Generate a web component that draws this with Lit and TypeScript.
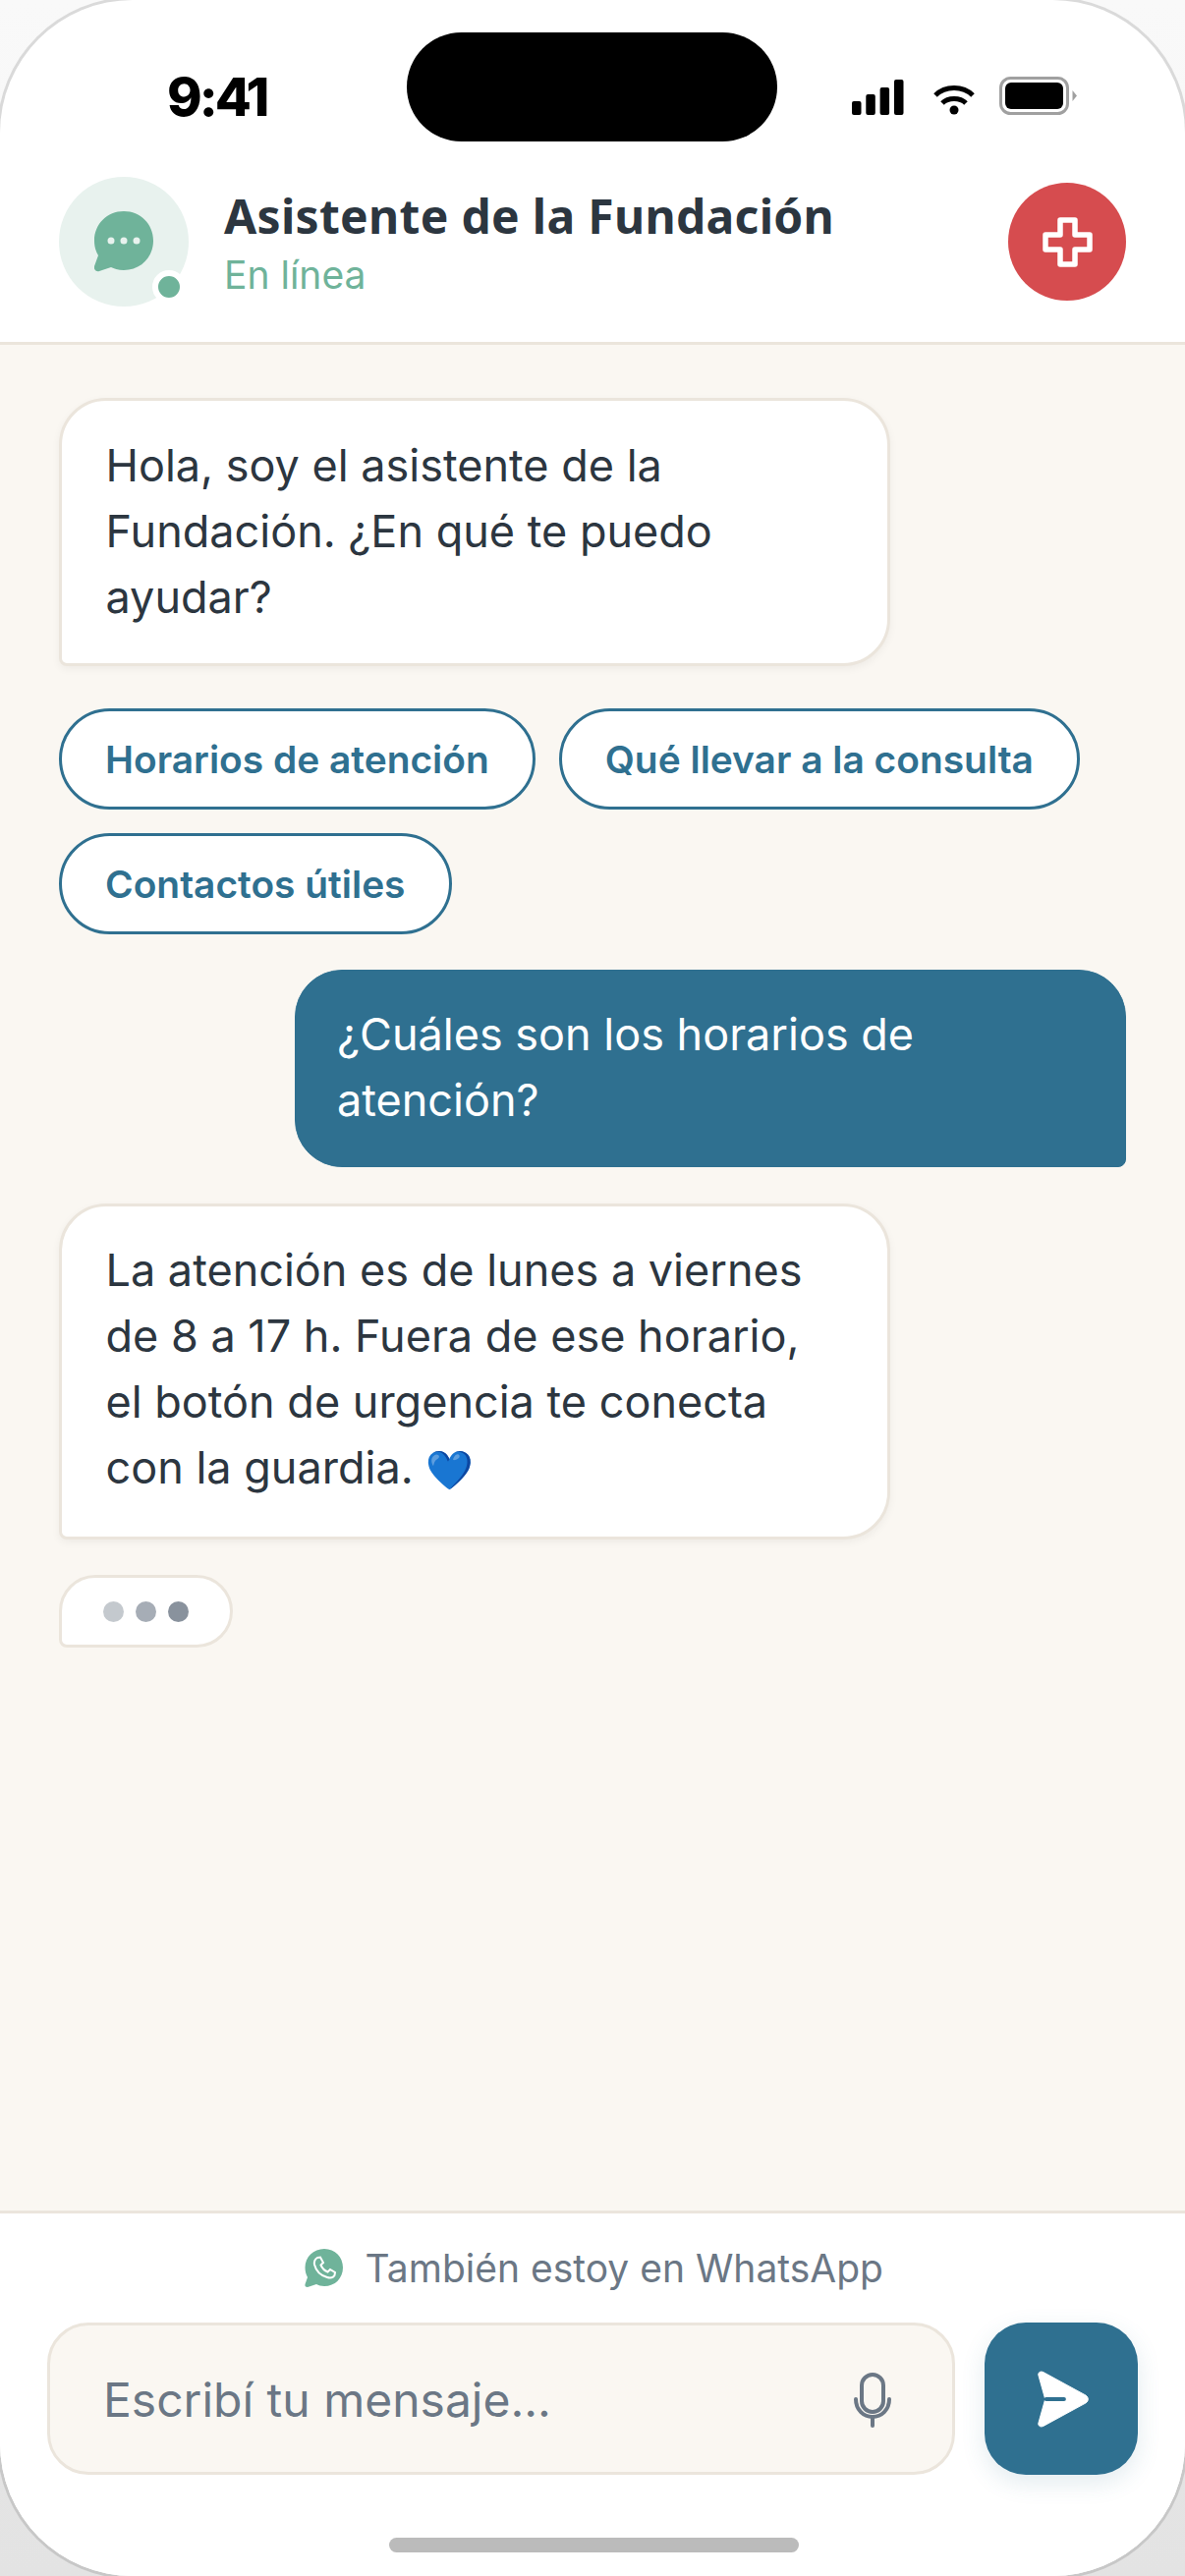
import { LitElement, html, css } from 'lit';
import { customElement } from 'lit/decorators.js';

@customElement('app-root')
export class AppRoot extends LitElement {
	static styles = css`
		:host {
			display: block;
			width: 1206px;
			height: 2622px;
			background: linear-gradient(180deg, #f9f9f9 0%, #e3e3e3 100%);
			font-family: 'Inter', 'Liberation Sans', sans-serif;
			color: #2c3640;
			overflow: hidden;
		}
		.phone {
			box-sizing: border-box;
			width: 1206px;
			height: 2622px;
			border-radius: 135px;
			background: #fff;
			box-shadow: 0 0 0 3px rgba(0, 0, 0, 0.12);
			overflow: hidden;
			display: flex;
			flex-direction: column;
		}
		.status {
			height: 180px;
			flex: none;
			display: flex;
			align-items: flex-start;
			padding: 33px 110px 0 170px;
			box-sizing: border-box;
		}
		.time {
			width: 102px;
			font-size: 54px;
			font-weight: 800;
			line-height: 66px;
			margin-top: 33px;
			letter-spacing: -3px;
			white-space: nowrap;
			color: #000;
		}
		.island {
			width: 377px;
			height: 111px;
			background: #000;
			border-radius: 56px;
			margin-left: 142px;
		}
		.status-icons {
			display: flex;
			align-items: flex-end;
			margin: 45px 0 0 auto;
			gap: 25px;
		}
		.status-icons svg {
			display: block;
		}
		.signal {
			margin-right: 5px;
		}
		.header {
			flex: none;
			height: 171px;
			box-sizing: border-box;
			border-bottom: 3px solid #ebe5dc;
			display: flex;
			align-items: flex-start;
			padding: 0 60px;
		}
		.avatar {
			width: 132px;
			height: 132px;
			border-radius: 50%;
			background: #e8f2ee;
			display: flex;
			align-items: center;
			justify-content: center;
			position: relative;
			flex: none;
		}
		.online {
			position: absolute;
			right: 3px;
			bottom: 3px;
			width: 22px;
			height: 22px;
			border-radius: 50%;
			background: #6fb39a;
			border: 6px solid #fff;
		}
		.who {
			flex: 1;
			padding: 8px 0 0 36px;
		}
		.name {
			font-family: 'Noto Sans', sans-serif;
			font-size: 48px;
			font-weight: 700;
			line-height: 64px;
			letter-spacing: 0.3px;
			color: #2c3640;
		}
		.state {
			font-size: 39px;
			line-height: 56px;
			color: #6fb39a;
		}
		.sos {
			flex: none;
			width: 120px;
			height: 120px;
			margin-top: 6px;
			border-radius: 50%;
			background: #d64c4f;
			display: flex;
			align-items: center;
			justify-content: center;
		}
		.chat {
			flex: 1;
			background: #faf7f2;
			display: flex;
			flex-direction: column;
			align-items: flex-start;
			padding: 54px 60px 0;
			gap: 36.5px;
		}
		.bubble {
			box-sizing: border-box;
			width: 846px;
			padding: 31.5px 44.5px 34.5px;
			font-size: 45px;
			line-height: 67px;
			border-radius: 48px 48px 48px 8px;
			background: #fff;
			border: 3px solid #ebe5dc;
			box-shadow: 0 3px 8px rgba(0, 0, 0, 0.05);
		}
		.bubble.user {
			align-self: flex-end;
			padding: 31px 42px 34px;
			background: #2f7090;
			border: 1px solid #2f7090;
			color: #fff;
			box-shadow: none;
			border-radius: 48px 48px 8px 48px;
		}
		.emoji {
			font-size: 39px;
		}
		.chips {
			display: flex;
			flex-wrap: wrap;
			gap: 24px;
			margin-top: 6px;
		}
		.chip {
			box-sizing: border-box;
			height: 103px;
			padding: 0 44px;
			display: flex;
			align-items: center;
			border: 3px solid #2f7090;
			border-radius: 52px;
			background: #fff;
			color: #2f7090;
			font-size: 38.9px;
			font-weight: 600;
		}
		.typing {
			box-sizing: border-box;
			width: 177px;
			height: 74px;
			border: 3px solid #ebe5dc;
			border-radius: 37px 37px 37px 8px;
			background: #fff;
			display: flex;
			align-items: center;
			justify-content: center;
			gap: 12px;
		}
		.dot {
			width: 21px;
			height: 21px;
			border-radius: 50%;
			background: #6b7785;
		}
		.footer {
			flex: none;
			height: 372px;
			box-sizing: border-box;
			border-top: 3px solid #ebe5dc;
			background: #fff;
			display: flex;
			flex-direction: column;
		}
		.wa {
			height: 111px;
			display: flex;
			align-items: center;
			justify-content: center;
			gap: 22.5px;
			padding-left: 3px;
			font-size: 39px;
			color: #6b7785;
			flex: none;
		}
		.composer {
			display: flex;
			gap: 30px;
			padding: 0 48px;
			height: 155px;
			flex: none;
		}
		.input {
			flex: 1;
			box-sizing: border-box;
			border: 3px solid #ebe5dc;
			border-radius: 42px;
			background: #faf7f2;
			display: flex;
			align-items: center;
			justify-content: space-between;
			padding: 2px 62px 0 54px;
			font-size: 48px;
			color: #6b7785;
		}
		.send {
			flex: none;
			width: 156px;
			border-radius: 42px;
			background: #2f7090;
			display: flex;
			align-items: center;
			justify-content: center;
			box-shadow: 0 8px 24px rgba(47, 112, 144, 0.14);
		}
		.send svg {
			margin-left: 4px;
		}
		.home {
			width: 417px;
			height: 15px;
			border-radius: 8px;
			background: #bbbbbb;
			margin: 64px 0 0 396px;
			flex: none;
		}
	`;

	render() {
		return html`<div class="phone">
			<div class="status">
				<span class="time">9:41</span>
				<div class="island"></div>
				<div class="status-icons">
					<svg class="signal" width="53" height="36" viewBox="0 0 53 36" fill="#000">
						<rect x="0" y="22" width="9.500" height="14" rx="2"></rect>
						<rect x="14.300" y="15" width="9.500" height="21" rx="2"></rect>
						<rect x="28.600" y="8" width="9.500" height="28" rx="2"></rect>
						<rect x="43" y="0" width="9.500" height="36" rx="2"></rect>
					</svg>
					<svg width="42" height="31" viewBox="0 0 42 31" fill="none" stroke="#000" stroke-width="5">
						<path d="M2 11 C12 1 30 1 40 11"></path>
						<path d="M9 19 C15 13 27 13 33 19"></path>
						<circle cx="21" cy="26" r="4.500" fill="#000" stroke="none"></circle>
					</svg>
					<svg width="79" height="39" viewBox="0 0 79 39">
						<rect x="1.500" y="1.500" width="68" height="36" rx="10" fill="none" stroke="#a0a0a0" stroke-width="3"></rect>
						<rect x="6" y="6" width="59" height="27" rx="6" fill="#000"></rect>
						<path d="M74.500 14 L79 19.500 L74.500 25 Z" fill="#a0a0a0"></path>
					</svg>
				</div>
			</div>
			<div class="header">
				<div class="avatar">
					<svg width="60" height="62" viewBox="0 0 60 62">
						<path d="M30 0 C47 0 60 13 60 30 C60 47 47 60 30 60 C24 60 20 58 17 57 L5 61 C2 62 -1 59 0 56 L4 45 C1 40 0 35 0 30 C0 13 13 0 30 0 Z" fill="#6fb39a"></path>
						<circle cx="17" cy="30" r="3.500" fill="#e8f2ee"></circle>
						<circle cx="30" cy="30" r="3.500" fill="#e8f2ee"></circle>
						<circle cx="43" cy="30" r="3.500" fill="#e8f2ee"></circle>
					</svg>
					<span class="online"></span>
				</div>
				<div class="who">
					<div class="name">Asistente de la Fundación</div>
					<div class="state">En línea</div>
				</div>
				<div class="sos">
					<svg width="51" height="51" viewBox="0 0 51 51" fill="none" stroke="#fff" stroke-width="5.500" stroke-linejoin="round">
						<path d="M18 3 H33 V18 H48 V33 H33 V48 H18 V33 H3 V18 H18 Z"></path>
					</svg>
				</div>
			</div>
			<div class="chat">
				<div class="bubble">Hola, soy el asistente de la Fundación. ¿En qué te puedo ayudar?</div>
				<div class="chips">
					<div class="chip">Horarios de atención</div>
					<div class="chip">Qué llevar a la consulta</div>
					<div class="chip">Contactos útiles</div>
				</div>
				<div class="bubble user">¿Cuáles son los horarios de atención?</div>
				<div class="bubble">La atención es de lunes a viernes de 8 a 17 h. Fuera de ese horario, el botón de urgencia te conecta con la guardia. <span class="emoji">💙</span></div>
				<div class="typing">
					<span class="dot" style="opacity:0.4"></span>
					<span class="dot" style="opacity:0.6"></span>
					<span class="dot" style="opacity:0.8"></span>
				</div>
			</div>
			<div class="footer">
				<div class="wa">
					<svg width="39" height="39" viewBox="0 0 39 39">
						<path d="M20 0 C31 0 39 8.500 39 19 C39 30 31 38 20 38 C17 38 14 37 12 36 L3 39 C1 39 0 38 0.500 36 L3 29 C1.500 26 0.500 23 0.500 19 C0.500 8.500 9 0 20 0 Z" fill="#6fb39a"></path>
						<path d="M13 9 L16 8.500 L19 14 L16.500 16.500 C18 20 20 22 23.500 23.500 L26 21 L31 24 L30.500 27 C29 29.500 26 30 23 29 C16 27 11.500 22 10 16 C9.500 13 10.500 10.500 13 9 Z" fill="none" stroke="#fff" stroke-width="2"></path>
					</svg>
					<span>También estoy en WhatsApp</span>
				</div>
				<div class="composer">
					<div class="input">
						<span>Escribí tu mensaje...</span>
						<svg width="38" height="56" viewBox="0 0 38 56" fill="none" stroke="#6b7785" stroke-width="4" stroke-linecap="round">
							<rect x="8" y="2" width="22" height="38" rx="11"></rect>
							<path d="M2 27 C2 38 10 45 19 45 C28 45 36 38 36 27"></path>
							<path d="M19 45 V54"></path>
						</svg>
					</div>
					<div class="send">
						<svg width="52" height="58" viewBox="0 0 54 60">
							<path d="M6 1.500 L51 26 C54 28 54 32 51 34 L6 58.500 C3 60 0 58 1 55 L8 30 L1 5 C0 2 3 0 6 1.500 Z" fill="#fff" stroke="#fff" stroke-linejoin="round"></path>
							<path d="M9 30 H28" stroke="#2f7090" stroke-width="4" stroke-linecap="round"></path>
						</svg>
					</div>
				</div>
				<div class="home"></div>
			</div>
		</div>`;
	}
}
